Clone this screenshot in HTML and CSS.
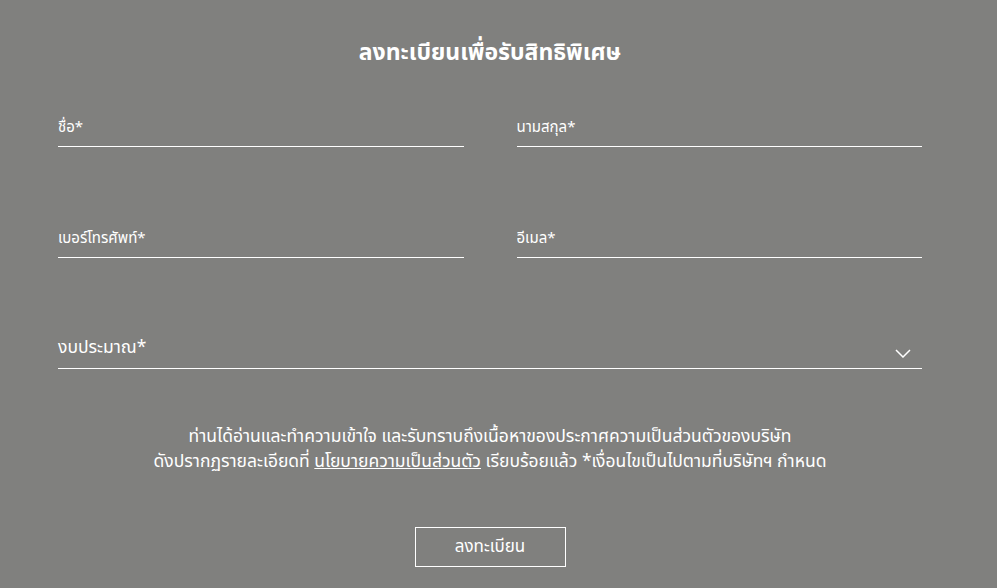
FILE: index.html
```html
<!DOCTYPE html>
<html lang="th">
<head>
<meta charset="UTF-8" />
<meta name="viewport" content="width=device-width, initial-scale=1" />
<title>ลงทะเบียน</title>
<link rel="stylesheet" href="styles.css">
</head>
<body>

<div id="register">
  <h2 class="title">ลงทะเบียนเพื่อรับสิทธิพิเศษ</h2>

  <form class="reg-form" onsubmit="return false;">
    <div class="field"><input type="text" placeholder="ชื่อ*" /></div>
    <div class="field"><input type="text" placeholder="นามสกุล*" /></div>
    <div class="field"><input type="tel" placeholder="เบอร์โทรศัพท์*" /></div>
    <div class="field"><input type="email" placeholder="อีเมล*" /></div>

    <div class="field field-select">
      <span class="select-label">งบประมาณ*</span>
      <svg class="chevron" width="16" height="9" viewBox="0 0 16 9">
        <polyline points="1,1 8,8 15,1" fill="none" stroke="#fff" stroke-width="1.5" />
      </svg>
    </div>

    <p class="consent">
      ท่านได้อ่านและทำความเข้าใจ และรับทราบถึงเนื้อหาของประกาศความเป็นส่วนตัวของบริษัท<br>
      ดังปรากฏรายละเอียดที่ <a href="#">นโยบายความเป็นส่วนตัว</a> เรียบร้อยแล้ว *เงื่อนไขเป็นไปตามที่บริษัทฯ กำหนด
    </p>

    <div class="actions">
      <button type="submit">ลงทะเบียน</button>
    </div>
  </form>
</div>

</body>
</html>
```

FILE: styles.css
```css
body {
  margin: 0;
  padding-right: 17px;
  background: #80807e;
  color: #fff;
  font-family: "Noto Sans Thai", "Noto Sans", "Liberation Sans", sans-serif;
}
#register {
  width: 864px;
  margin: 0 auto;
}
.title {
  margin: 0;
  padding-top: 38px;
  font-size: 23px;
  line-height: 30px;
  font-weight: bold;
  text-align: center;
}
.reg-form {
  display: grid;
  grid-template-columns: 1fr 1fr;
  column-gap: 53px;
  row-gap: 74px;
  margin-top: 42px;
}
.field {
  height: 36px;
  border-bottom: 1px solid #fff;
  display: flex;
  align-items: flex-end;
}
.field input {
  width: 100%;
  border: none;
  background: transparent;
  outline: none;
  color: #fff;
  font-family: inherit;
  font-size: 15px;
  padding: 0 0 7px 0;
}
.field input::placeholder {
  color: #fff;
  opacity: 1;
}
.field-select {
  grid-column: 1 / 3;
  justify-content: space-between;
  cursor: pointer;
}
.select-label {
  font-size: 17.5px;
  padding-bottom: 7px;
}
.chevron {
  margin: 0 11px 10px 0;
}
.consent {
  grid-column: 1 / 3;
  margin: -19px 0 0 0;
  font-size: 17.5px;
  line-height: 25px;
  text-align: center;
}
.consent a {
  color: #fff;
}
.actions {
  grid-column: 1 / 3;
  margin-top: -21px;
  text-align: center;
}
button {
  width: 151px;
  height: 40px;
  background: transparent;
  border: 1px solid #fff;
  color: #fff;
  font-family: inherit;
  font-size: 17px;
  cursor: pointer;
}
```
